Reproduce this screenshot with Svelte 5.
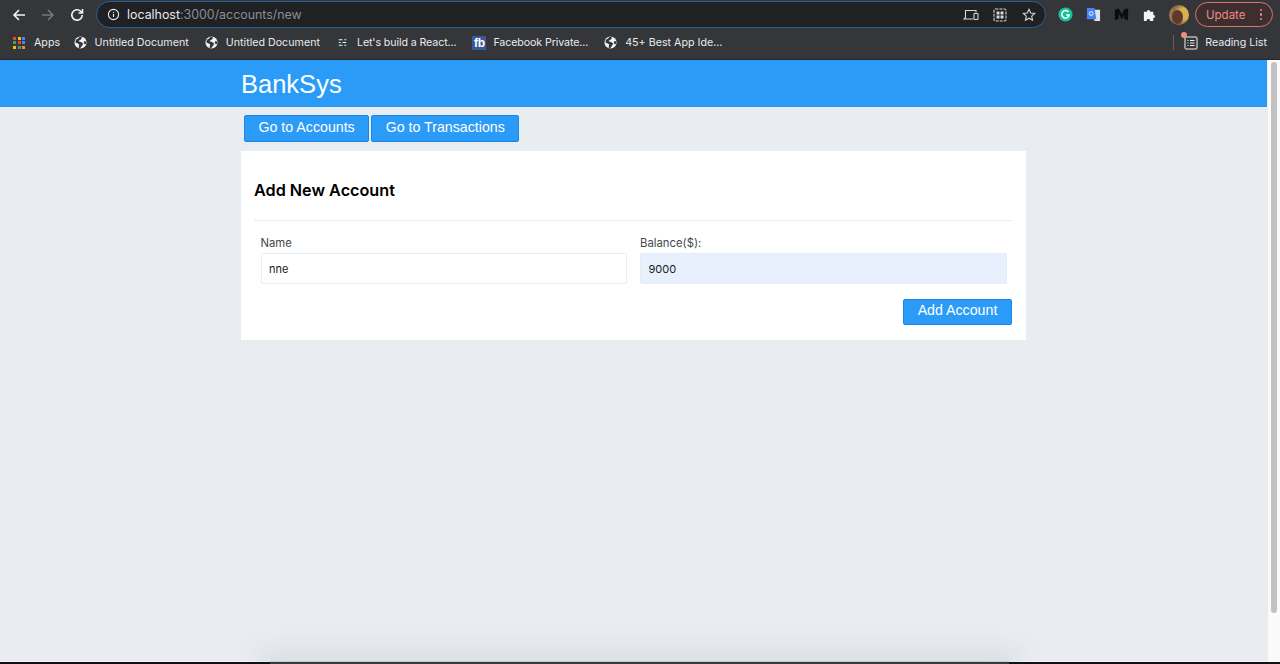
<script>
  const bookmarks = [
    { label: 'Untitled Document', icon: 'globe' },
    { label: 'Untitled Document', icon: 'globe' },
    { label: "Let's build a React...", icon: 'lines' },
    { label: 'Facebook Private...', icon: 'fb' },
    { label: '45+ Best App Ide...', icon: 'globe' }
  ];
  const appColors = ['#ea4335', '#fbbc04', '#4285f4', '#34a853', '#ea4335', '#4285f4', '#fbbc04', '#34a853', '#f28b1c'];

  let name = 'nne';
  let balance = '9000';
</script>

<div class="screen">
  <div class="chrome">
    <div class="toolbar">
      <div class="nav">
        <svg class="nav-icon" viewBox="0 0 16 16"><path d="M14 8H3M8 3 3 8l5 5" /></svg>
        <svg class="nav-icon dim" viewBox="0 0 16 16"><path d="M2 8h11M8 3l5 5-5 5" /></svg>
        <svg class="nav-icon" viewBox="0 0 16 16"><path d="M13.2 8a5.2 5.2 0 1 1-1.5-3.7L13.5 6M13.5 2v4h-4" /></svg>
      </div>
      <div class="omnibox">
        <svg class="info" viewBox="0 0 14 14"><circle cx="7" cy="7" r="5.5" /><path d="M7 6.2v3.6M7 4v1.2" /></svg>
        <span class="url">localhost<span class="url-rest">:3000/accounts/new</span></span>
        <div class="omni-actions">
          <svg class="omni-icon laptop" viewBox="0 0 16 14"><path d="M10 11H1l1.500-1.500V2.500H13v2" /><rect x="11" y="5.500" width="4" height="6" rx=".5" /></svg>
          <svg class="omni-icon" viewBox="0 0 14 14"><rect x="1" y="1" width="12" height="12" rx="1.500" stroke-dasharray="3 1" /><rect x="3.500" y="3.500" width="3" height="3" class="solid" /><rect x="7.500" y="3.500" width="3" height="3" class="solid" /><rect x="3.500" y="7.500" width="3" height="3" class="solid" /><rect x="7.500" y="7.500" width="3" height="3" class="solid" /></svg>
          <svg class="omni-icon" viewBox="0 0 14 14"><path d="m7 1.300 1.700 3.700 4 .5-3 2.700.8 4L7 10.200 3.500 12.200l.8-4-3-2.700 4-.5z" /></svg>
        </div>
      </div>
      <div class="extensions">
        <svg class="ext" viewBox="0 0 16 16"><circle cx="8" cy="8" r="7.500" fill="#15c39a" /><path d="M11.200 5.300A4 4 0 1 0 12 8.500H8.700" fill="none" stroke="#fff" stroke-width="1.600" /></svg>
        <svg class="ext" viewBox="0 0 16 16"><path d="M7 3h8v12H9z" fill="#dfe3ea" /><path d="M1 1h8l2 12H1z" fill="#4285f4" /><circle cx="5.500" cy="7" r="2" fill="none" stroke="#fff" stroke-width="1" /></svg>
        <svg class="ext" viewBox="0 0 16 16"><path d="M1 3l4-1.500v11L1 14zM5 1.500 8.500 8 11 2.500l4-1V14l-4-1.500V8l-2.500 5L5 7z" fill="#0b0b0b" /></svg>
        <svg class="ext" viewBox="0 0 16 16"><path d="M2 5h3.200a1.800 1.800 0 1 1 3.600 0H12v3.200a1.800 1.800 0 1 1 0 3.600V15H8.500a1.800 1.800 0 1 0-3.500 0H2z" fill="#f1f3f4" /></svg>
        <div class="avatar"><span class="avatar-face"></span></div>
        <div class="update">
          <span>Update</span>
          <span class="dots"><i></i><i></i><i></i></span>
        </div>
      </div>
    </div>

    <div class="bookmarks">
      <div class="bookmark first">
        <span class="apps">
          {#each appColors as color}
            <i style="background: {color};"></i>
          {/each}
        </span>
        <span>Apps</span>
      </div>
      {#each bookmarks as b}
        <div class="bookmark" class:tight={b.icon !== 'globe'}>
          {#if b.icon === 'globe'}
            <svg class="bm-icon" viewBox="0 0 14 14"><circle cx="7" cy="7" r="6.500" fill="#f1f3f4" /><path d="M6 1 4 3 2 4l-.5 3L4 8l1.500 1-.5 3.500 1.500 1L9 10l1-2-2.500-1.500L5.500 6 5 5l2-1 1.500-1.500L8 .8zM13 6l-2-.5-.5 1.500 1 2 1.500-.5z" fill="#35363a" /></svg>
          {:else if b.icon === 'lines'}
            <svg class="bm-icon" viewBox="0 0 14 14"><rect width="14" height="14" rx="2" fill="#2e3a3e" /><path d="M3 4h4M9 4h2M3 7h2M7 7h4M3 10h4M9 10h2" stroke="#f1f3f4" stroke-width="1.200" /></svg>
          {:else}
            <span class="fb">fb</span>
          {/if}
          <span>{b.label}</span>
        </div>
      {/each}
      <div class="reading">
        <span class="reading-icon">
          <svg viewBox="0 0 14 14"><rect x="1" y="1" width="12" height="12" rx="1" /><path d="M3.500 4.500h1M6 4.500h4.500M3.500 7h1M6 7h4.500M3.500 9.500h1M6 9.500h4.500" /></svg>
          <i></i>
        </span>
        <span>Reading List</span>
      </div>
    </div>
  </div>

  <div class="viewport">
    <div class="page">
      <header class="brand-bar">
        <div class="wrap"><h1>BankSys</h1></div>
      </header>

      <main class="wrap">
        <nav class="links">
          <button type="button" class="btn">Go to Accounts</button>
          <button type="button" class="btn">Go to Transactions</button>
        </nav>

        <section class="card">
          <h2>Add New Account</h2>
          <hr />
          <form on:submit|preventDefault>
            <div class="fields">
              <label>
                <span>Name</span>
                <input type="text" bind:value={name} />
              </label>
              <label>
                <span>Balance($):</span>
                <input type="text" class="filled" bind:value={balance} />
              </label>
            </div>
            <div class="actions">
              <button type="submit" class="btn submit">Add Account</button>
            </div>
          </form>
        </section>
      </main>

      <div class="spacer"></div>
      <div class="dock-shadow"></div>
    </div>
    <div class="scrollbar"><div class="thumb"></div></div>
  </div>
  <div class="bottom-edge"><div class="dock"></div></div>
</div>

<style>
  :global(body) {
    margin: 0;
    overflow: hidden;
  }

  .screen {
    display: flex;
    flex-direction: column;
    width: 1280px;
    height: 664px;
    overflow: hidden;
    font-family: "Liberation Sans", Arial, sans-serif;
  }

  .chrome {
    flex: none;
    height: 60px;
    background: #35363a;
    border-bottom: 1px solid #26272a;
    box-sizing: border-box;
    font-family: Inter, "Liberation Sans", sans-serif;
  }

  .toolbar {
    display: flex;
    align-items: center;
    height: 29px;
  }

  .nav {
    display: flex;
    align-items: center;
    gap: 13px;
    width: 96px;
    padding-left: 11px;
    box-sizing: border-box;
    flex: none;
  }

  .nav-icon {
    width: 16px;
    height: 16px;
    fill: none;
    stroke: #f1f3f4;
    stroke-width: 1.6;
  }

  .nav-icon.dim {
    stroke: #75777a;
  }

  .omnibox {
    display: flex;
    align-items: center;
    width: 950px;
    height: 27px;
    flex: none;
    box-sizing: border-box;
    padding: 0 9px 0 10px;
    background: #202124;
    border: 1.5px solid #2b6292;
    border-radius: 14px;
  }

  .info {
    width: 13px;
    height: 13px;
    fill: none;
    stroke: #e8eaed;
    stroke-width: 1.2;
    flex: none;
  }

  .url {
    margin-left: 7px;
    font-size: 12.4px;
    color: #e8eaed;
  }

  .url-rest {
    color: #8b8e92;
  }

  .omni-actions {
    display: flex;
    align-items: center;
    gap: 15px;
    margin-left: auto;
  }

  .omni-icon {
    width: 14px;
    height: 14px;
    fill: none;
    stroke: #d5d7da;
    stroke-width: 1.1;
  }

  .omni-icon.laptop {
    width: 16px;
    margin-right: -1px;
  }

  .omni-icon .solid {
    fill: #d5d7da;
    stroke: none;
  }

  .extensions {
    display: flex;
    align-items: center;
    gap: 13px;
    margin-left: 12px;
  }

  .ext {
    width: 15px;
    height: 15px;
    flex: none;
  }

  .avatar {
    width: 20px;
    height: 20px;
    margin-left: -1px;
    border-radius: 50%;
    background: radial-gradient(circle at 72% 45%, #d8b14f 0 30%, #8f6a4a 55%, #b08a6c);
    overflow: hidden;
    display: flex;
    justify-content: center;
    flex: none;
  }

  .avatar-face {
    width: 11px;
    height: 14px;
    margin-top: 5px;
    margin-right: 3px;
    border-radius: 50%;
    background: #5d3a2a;
  }

  .update {
    display: flex;
    align-items: center;
    justify-content: space-between;
    width: 78px;
    height: 25px;
    margin-left: -7px;
    padding: 0 10px;
    box-sizing: border-box;
    border: 1px solid #d9756c;
    border-radius: 13px;
    background: #3d2f30;
    color: #ea8a80;
    font-size: 11.5px;
    flex: none;
  }

  .dots {
    display: flex;
    flex-direction: column;
    gap: 2px;
  }

  .dots i {
    width: 2.5px;
    height: 2.5px;
    border-radius: 50%;
    background: #ea8a80;
  }

  .bookmarks {
    display: flex;
    align-items: center;
    gap: 16px;
    height: 27px;
    padding: 0 13px;
    color: #e8eaed;
    font-size: 10.7px;
  }

  .bookmark {
    display: flex;
    align-items: center;
    gap: 8px;
    white-space: nowrap;
  }

  .bookmark.first {
    margin-right: -2.5px;
  }

  .bookmark.tight {
    letter-spacing: -0.12px;
  }

  .apps {
    display: grid;
    grid-template-columns: repeat(3, 3px);
    grid-auto-rows: 3px;
    gap: 1.5px;
    margin-right: 1px;
  }

  .bm-icon {
    width: 13px;
    height: 13px;
    flex: none;
  }

  .fb {
    width: 14px;
    height: 14px;
    margin-right: -1px;
    background: #3b5998;
    color: #fff;
    font-family: "Liberation Sans", sans-serif;
    font-weight: 700;
    font-size: 12px;
    line-height: 14px;
    text-align: center;
    flex: none;
  }

  .reading {
    display: flex;
    align-items: center;
    gap: 7px;
    margin-left: auto;
    padding-left: 10px;
    border-left: 1px solid #5f6165;
    height: 15px;
    white-space: nowrap;
  }

  .reading-icon {
    position: relative;
    display: flex;
  }

  .reading-icon svg {
    width: 14px;
    height: 14px;
    fill: none;
    stroke: #f1f3f4;
    stroke-width: 1;
  }

  .reading-icon i {
    position: absolute;
    top: -4px;
    left: -3px;
    width: 6px;
    height: 6px;
    border-radius: 50%;
    background: #f28b82;
  }

  .viewport {
    display: flex;
    flex: 1;
    min-height: 0;
  }

  .page {
    display: flex;
    flex-direction: column;
    flex: 1;
    min-width: 0;
    box-sizing: border-box;
    background: #e9edf2;
    border-bottom: 1px solid #f3f4f6;
  }

  .brand-bar {
    flex: none;
    box-sizing: border-box;
    height: 47px;
    background: #2b9bf8;
    border-bottom: 1px solid #2a97f0;
  }

  .wrap {
    width: 785px;
    margin-left: 241px;
  }

  h1 {
    margin: 0;
    padding-top: 8px;
    font-size: 25.5px;
    line-height: 33px;
    font-weight: 400;
    color: #fff;
  }

  .links {
    display: flex;
    gap: 2px;
    padding: 8px 0 9px 3px;
  }

  .btn {
    height: 27px;
    padding: 0 13.5px 4px;
    border: 1px solid #1a87e8;
    border-radius: 2px;
    background: #2b9bf8;
    color: #fff;
    font-family: "Liberation Sans", Arial, sans-serif;
    font-size: 14.2px;
    cursor: pointer;
  }

  .card {
    height: 189px;
    box-sizing: border-box;
    padding: 0 13px;
    background: #fff;
  }

  h2 {
    margin: 0;
    padding-top: 29px;
    font-family: Inter, "Liberation Sans", sans-serif;
    font-size: 16.2px;
    line-height: 20px;
    font-weight: 600;
    color: #000;
  }

  hr {
    margin: 20px 0 0;
    border: 0;
    border-top: 1px solid #e9ebee;
  }

  .fields {
    display: grid;
    grid-template-columns: 366.5px 366.5px;
    gap: 13px;
    padding: 15px 6.5px 0;
  }

  label {
    display: flex;
    flex-direction: column;
    gap: 3px;
    font-family: Inter, "Liberation Sans", sans-serif;
    font-size: 11.3px;
    line-height: 14px;
    color: #45484b;
  }

  input {
    box-sizing: border-box;
    width: 100%;
    height: 31px;
    padding: 0 7.5px;
    border: 1px solid #e6ecf3;
    border-radius: 2px;
    background: #fff;
    color: #1b1b1b;
    font-family: Inter, "Liberation Sans", sans-serif;
    font-size: 11px;
    outline: none;
  }

  input.filled {
    background: #e8f0fe;
  }

  .actions {
    display: flex;
    justify-content: flex-end;
    padding: 14.5px 1px 0 0;
  }

  .submit {
    width: 109px;
    height: 26.5px;
    padding: 0 0 4px;
  }

  .spacer {
    flex: 1;
  }

  .dock-shadow {
    flex: none;
    height: 1px;
    width: 739px;
    margin: 0 0 -1px 270px;
    background: #c6c8cc;
    box-shadow: 0 0 24px 8px rgba(170, 174, 180, 0.35);
  }

  .scrollbar {
    flex: none;
    width: 13px;
    box-sizing: border-box;
    padding: 2px 3px 0;
    background: #fafafa;
    border-left: 1px solid #ededed;
  }

  .thumb {
    height: 551px;
    border-radius: 4px;
    background: #c1c1c1;
  }

  .bottom-edge {
    flex: none;
    height: 2px;
    background: #111;
  }

  .dock {
    width: 739px;
    height: 2px;
    margin-left: 270px;
    background: #3a3a3c;
  }
</style>
